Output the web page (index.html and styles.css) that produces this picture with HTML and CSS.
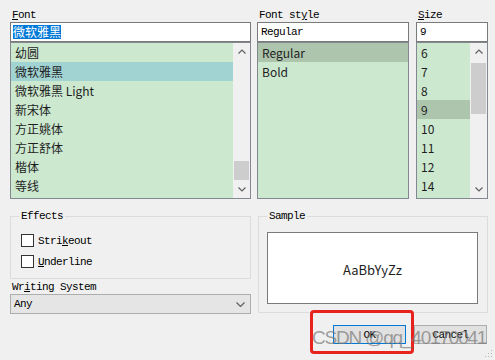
FILE: index.html
```html
<!DOCTYPE html>
<html lang="zh-CN">
<head>
    <meta charset="utf-8">
    <title>Select Font</title>
    <link rel="stylesheet" href="styles.css">
</head>
<body>
<div class="dialog">
    <div class="pickers">
        <div class="picker font-picker">
            <div class="caption"><u>F</u>ont</div>
            <div class="edit"><span class="selected-text">微软雅黑</span></div>
            <div class="list">
                <ul class="items">
                    <li>幼圆</li>
                    <li class="current">微软雅黑</li>
                    <li>微软雅黑 Light</li>
                    <li>新宋体</li>
                    <li>方正姚体</li>
                    <li>方正舒体</li>
                    <li>楷体</li>
                    <li>等线</li>
                </ul>
                <div class="scrollbar">
                    <div class="arrow"><svg width="8" height="5" viewBox="0 0 8 5"><polyline points="0.5,4.5 4,1 7.5,4.5" /></svg></div>
                    <div class="track"><div class="thumb font-thumb"></div></div>
                    <div class="arrow"><svg width="8" height="5" viewBox="0 0 8 5"><polyline points="0.5,0.5 4,4 7.5,0.5" /></svg></div>
                </div>
            </div>
        </div>

        <div class="picker style-picker">
            <div class="caption">Font st<u>y</u>le</div>
            <div class="edit">Regular</div>
            <div class="list">
                <ul class="items">
                    <li class="chosen">Regular</li>
                    <li>Bold</li>
                </ul>
            </div>
        </div>

        <div class="picker size-picker">
            <div class="caption"><u>S</u>ize</div>
            <div class="edit">9</div>
            <div class="list">
                <ul class="items">
                    <li>6</li>
                    <li>7</li>
                    <li>8</li>
                    <li class="chosen">9</li>
                    <li>10</li>
                    <li>11</li>
                    <li>12</li>
                    <li>14</li>
                </ul>
                <div class="scrollbar">
                    <div class="arrow"><svg width="8" height="5" viewBox="0 0 8 5"><polyline points="0.5,4.5 4,1 7.5,4.5" /></svg></div>
                    <div class="track"><div class="thumb size-thumb"></div></div>
                    <div class="arrow"><svg width="8" height="5" viewBox="0 0 8 5"><polyline points="0.5,0.5 4,4 7.5,0.5" /></svg></div>
                </div>
            </div>
        </div>
    </div>

    <div class="lower">
        <div class="left-col">
            <div class="group effects">
                <div class="group-title">Effects</div>
                <div class="checks">
                    <div class="check-row"><span class="box"></span>Stri<u>k</u>eout</div>
                    <div class="check-row"><span class="box"></span><u>U</u>nderline</div>
                </div>
            </div>
            <div class="caption system-caption">Wr<u>i</u>ting System</div>
            <div class="combo">
                <span>Any</span>
                <svg width="9" height="5" viewBox="0 0 9 5"><polyline points="0.5,0.5 4.5,4.5 8.5,0.5" /></svg>
            </div>
        </div>

        <div class="group sample">
            <div class="group-title">Sample</div>
            <div class="preview">AaBbYyZz</div>
        </div>
    </div>

    <div class="buttons">
        <button class="btn default">OK</button>
        <button class="btn">Cancel</button>
    </div>

    <div class="callout"></div>
    <div class="watermark">CSDN @qq_40170041</div>
    <svg class="grip" width="8" height="8" viewBox="0 0 8 8">
        <rect x="6" y="0" width="1" height="1" /><rect x="3" y="3" width="1" height="1" /><rect x="6" y="3" width="1" height="1" />
        <rect x="0" y="6" width="1" height="1" /><rect x="3" y="6" width="1" height="1" /><rect x="6" y="6" width="1" height="1" />
    </svg>
</div>
</body>
</html>
```

FILE: styles.css
```css
body {
    margin: 0;
    background: #f0f0f0;
    font-family: "Liberation Mono", monospace;
    font-size: 11px;
    color: #000;
}

.dialog {
    position: relative;
    width: 495px;
    height: 360px;
    box-sizing: border-box;
    padding: 8px 0 0 10px;
    overflow: hidden;
}

.pickers {
    display: flex;
}

.picker {
    display: flex;
    flex-direction: column;
}

.font-picker {
    width: 241px;
}

.style-picker {
    width: 152px;
    margin-left: 6px;
}

.size-picker {
    width: 72px;
    margin-left: 7px;
}

.caption {
    height: 14px;
    line-height: 14px;
    padding-left: 2px;
    letter-spacing: -0.6px;
}

.edit {
    height: 20px;
    box-sizing: border-box;
    border: 1px solid #7a7a7a;
    background: #fff;
    padding: 0 3px;
    line-height: 18px;
    letter-spacing: -0.6px;
}

.selected-text {
    display: inline-block;
    margin-left: -1px;
    background: #0078d7;
    color: #fff;
    font-family: "Noto Sans CJK SC", sans-serif;
    font-size: 12px;
    line-height: 14px;
    letter-spacing: 0;
    vertical-align: middle;
}

.list {
    display: flex;
    height: 157px;
    box-sizing: border-box;
    border: 1px solid #828790;
    background: #cce8cf;
}

.items {
    flex: 1;
    list-style: none;
    margin: 0;
    padding: 0;
    overflow: hidden;
    font-family: "Noto Sans CJK SC", sans-serif;
    font-size: 12px;
    color: #1e1e1e;
}

.items li {
    height: 19px;
    line-height: 19px;
    padding-left: 4px;
    white-space: nowrap;
}

.items .current {
    background: #a2d3d3;
}

.items .chosen {
    background: #adc4ad;
}

.scrollbar {
    display: flex;
    flex-direction: column;
    width: 17px;
    background: #f0f0f0;
}

.arrow {
    display: flex;
    align-items: center;
    justify-content: center;
    height: 17px;
}

.arrow polyline,
.combo polyline {
    fill: none;
    stroke: #606060;
    stroke-width: 1.2;
}

.track {
    flex: 1;
}

.thumb {
    margin: 0 1px;
    background: #cdcdcd;
}

.font-thumb {
    margin-top: 101px;
    height: 19px;
}

.size-thumb {
    margin-top: 3px;
    height: 51px;
}

.lower {
    display: flex;
    margin-top: 17px;
}

.left-col {
    width: 241px;
}

.group {
    box-sizing: border-box;
    border: 1px solid #dcdcdc;
}

.group-title {
    width: fit-content;
    margin: -8px 0 0 8px;
    padding: 0 2px;
    background: #f0f0f0;
    line-height: 14px;
    letter-spacing: -0.6px;
}

.effects {
    height: 63px;
}

.checks {
    padding: 7px 0 0 10px;
}

.check-row {
    display: flex;
    align-items: center;
    height: 21px;
    letter-spacing: -0.6px;
}

.box {
    width: 13px;
    height: 13px;
    box-sizing: border-box;
    border: 1px solid #333;
    background: #fff;
    margin-right: 4px;
}

.system-caption {
    height: 15px;
    line-height: 16px;
}

.combo {
    display: flex;
    align-items: center;
    justify-content: space-between;
    height: 20px;
    box-sizing: border-box;
    border: 1px solid #adadad;
    background: #e5e5e5;
    padding: 0 5px 0 3px;
    letter-spacing: -0.6px;
}

.sample {
    width: 230px;
    height: 97px;
    margin-left: 7px;
}

.preview {
    display: flex;
    align-items: center;
    justify-content: center;
    height: 72px;
    margin: 9px 9px 0 8px;
    padding-top: 3px;
    box-sizing: border-box;
    border: 1px solid #7a7a7a;
    background: #fff;
    font-family: "Noto Sans CJK SC", sans-serif;
    font-size: 13px;
    color: #1e1e1e;
}

.buttons {
    display: flex;
    justify-content: flex-end;
    gap: 8px;
    margin-top: 11px;
    padding-right: 8px;
}

.btn {
    width: 73px;
    height: 19px;
    padding: 0;
    border: 1px solid #adadad;
    background: #e1e1e1;
    font-family: "Liberation Mono", monospace;
    font-size: 11px;
    letter-spacing: -0.6px;
    color: #000;
}

.btn.default {
    border-color: #0078d7;
}

.callout {
    position: absolute;
    left: 310px;
    top: 310px;
    width: 104px;
    height: 44px;
    box-sizing: border-box;
    border: 3px solid #e8221c;
    border-radius: 4px;
}

.watermark {
    position: absolute;
    left: 312px;
    top: 327px;
    font-family: "Liberation Sans", Arial, sans-serif;
    font-size: 19px;
    letter-spacing: -1.2px;
    color: rgba(120, 120, 120, 0.7);
    white-space: nowrap;
}

.grip {
    position: absolute;
    right: 2px;
    bottom: 2px;
    fill: #b4b4b4;
}
```
